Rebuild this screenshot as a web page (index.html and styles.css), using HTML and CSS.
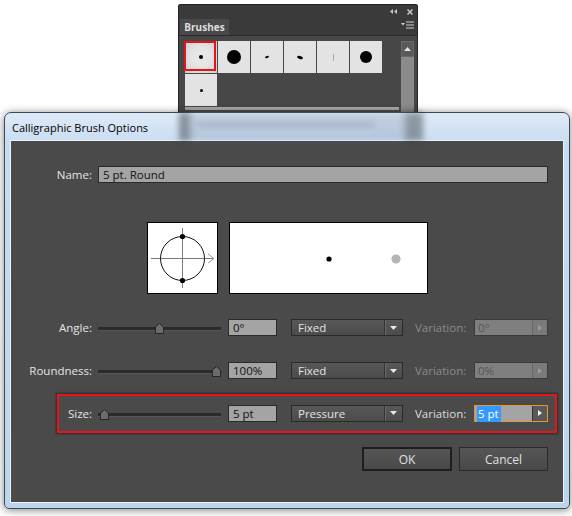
FILE: index.html
```html
<!DOCTYPE html>
<html lang="en">
<head>
    <meta charset="UTF-8">
    <title>Calligraphic Brush Options</title>
    <link rel="stylesheet" href="styles.css">
</head>
<body>
<div class="desk">

    <!-- Brushes panel behind the dialog -->
    <div class="panel">
        <div class="panel-top">
            <svg width="7" height="5" viewBox="0 0 7 5"><path d="M3 0 L0 2.5 L3 5 Z M7 0 L4 2.5 L7 5 Z" fill="#c8c8c8"/></svg>
            <svg width="6" height="6" viewBox="0 0 6 6"><path d="M0.5 0.5 L5.5 5.5 M5.5 0.5 L0.5 5.5" stroke="#c8c8c8" stroke-width="1.5"/></svg>
        </div>
        <div class="panel-tabs">
            <span class="tab">Brushes</span>
            <svg class="menu" width="13" height="8" viewBox="0 0 13 8"><path d="M0 2 H4 L2 4.5 Z" fill="#d0d0d0"/><path d="M5 1 H13 M5 4 H13 M5 7 H13" stroke="#d0d0d0" stroke-width="1.2"/></svg>
        </div>
        <div class="panel-body">
            <div class="brush-list">
                <div class="tiles">
                    <div class="tile selected"><span class="dot" style="width:4px;height:4px"></span><span class="pick"></span></div>
                    <div class="tile"><span class="dot" style="width:14px;height:14px"></span></div>
                    <div class="tile"><span class="dot dash"></span></div>
                    <div class="tile"><span class="dot blob"></span></div>
                    <div class="tile"><span class="hair"></span></div>
                    <div class="tile"><span class="dot" style="width:12px;height:12px"></span></div>
                    <div class="tile"><span class="dot" style="width:3px;height:3px"></span></div>
                </div>
                <div class="hscroll"></div>
            </div>
            <div class="vscroll">
                <div class="up"><svg width="7" height="4" viewBox="0 0 7 4"><path d="M0 4 L3.5 0 L7 4 Z" fill="#e6e6e6"/></svg></div>
            </div>
        </div>
    </div>

    <!-- dialog window -->
    <div class="dialog">
        <div class="titlebar">
            <div class="glass"></div>
            <span class="title">Calligraphic Brush Options</span>
        </div>
        <div class="content">
            <div class="row">
                <span class="label">Name:</span>
                <div class="field name-field">5 pt. Round</div>
            </div>

            <div class="preview">
                <div class="preview-box small">
                    <svg width="69" height="70" viewBox="0 0 69 70">
                        <path d="M3 35.5 H65 M34.5 5 V65" stroke="#7a7a7a" stroke-width="1"/>
                        <path d="M60 31 L66 35.5 L60 40" stroke="#9a9a9a" fill="none"/>
                        <circle cx="34.5" cy="35.5" r="22" stroke="#111" fill="none"/>
                        <circle cx="34.5" cy="13.5" r="2.6" fill="#000"/>
                        <circle cx="34.5" cy="57.5" r="2.6" fill="#000"/>
                    </svg>
                </div>
                <div class="preview-box big">
                    <svg width="197" height="70" viewBox="0 0 197 70">
                        <circle cx="99" cy="36" r="2.6" fill="#000"/>
                        <circle cx="166" cy="36" r="4.6" fill="#b5b5b5"/>
                    </svg>
                </div>
            </div>

            <div class="row angle-row">
                <span class="label">Angle:</span>
                <div class="slider"><div class="track"></div>
                    <svg class="thumb" style="left:57px" width="9" height="11" viewBox="0 0 9 11"><path d="M4.5 0.5 L8.5 4 V10.5 H0.5 V4 Z" fill="#6c6c6c" stroke="#252525"/></svg>
                </div>
                <div class="field num">0°</div>
                <div class="select"><span class="opt">Fixed</span><span class="arrow"><svg width="7" height="4" viewBox="0 0 7 4"><path d="M0 0 H7 L3.5 4 Z" fill="#e8e8e8"/></svg></span></div>
                <span class="var-label">Variation:</span>
                <div class="var"><span class="val">0°</span><span class="step"><svg width="4" height="6" viewBox="0 0 4 6"><path d="M0 0 L4 3 L0 6 Z" fill="#9c9c9c"/></svg></span></div>
            </div>

            <div class="row round-row">
                <span class="label">Roundness:</span>
                <div class="slider"><div class="track"></div>
                    <svg class="thumb" style="left:114px" width="9" height="11" viewBox="0 0 9 11"><path d="M4.5 0.5 L8.5 4 V10.5 H0.5 V4 Z" fill="#6c6c6c" stroke="#252525"/></svg>
                </div>
                <div class="field num">100%</div>
                <div class="select"><span class="opt">Fixed</span><span class="arrow"><svg width="7" height="4" viewBox="0 0 7 4"><path d="M0 0 H7 L3.5 4 Z" fill="#e8e8e8"/></svg></span></div>
                <span class="var-label">Variation:</span>
                <div class="var"><span class="val">0%</span><span class="step"><svg width="4" height="6" viewBox="0 0 4 6"><path d="M0 0 L4 3 L0 6 Z" fill="#9c9c9c"/></svg></span></div>
            </div>

            <div class="size-box">
                <div class="row">
                    <span class="label size-label">Size:</span>
                    <div class="slider"><div class="track"></div>
                        <svg class="thumb" style="left:2px" width="9" height="11" viewBox="0 0 9 11"><path d="M4.5 0.5 L8.5 4 V10.5 H0.5 V4 Z" fill="#6c6c6c" stroke="#252525"/></svg>
                    </div>
                    <div class="field num">5 pt</div>
                    <div class="select"><span class="opt">Pressure</span><span class="arrow"><svg width="7" height="4" viewBox="0 0 7 4"><path d="M0 0 H7 L3.5 4 Z" fill="#e8e8e8"/></svg></span></div>
                    <span class="var-label on">Variation:</span>
                    <div class="var active"><span class="val"><span class="sel">5 pt</span></span><span class="step"><svg width="4" height="6" viewBox="0 0 4 6"><path d="M0 0 L4 3 L0 6 Z" fill="#f2f2f2"/></svg></span></div>
                </div>
            </div>

            <div class="buttons">
                <div class="btn default">OK</div>
                <div class="btn">Cancel</div>
            </div>
        </div>
    </div>

</div>
</body>
</html>
```

FILE: styles.css
```css
body {
    margin: 0;
    background: #fff;
    font-family: "Open Sans", Arial, sans-serif;
}
.desk {
    position: relative;
    width: 572px;
    height: 516px;
    overflow: hidden;
}

/* brushes panel */
.panel {
    position: absolute;
    left: 178px;
    top: 4px;
    width: 240px;
    height: 130px;
    box-sizing: border-box;
    border: 1px solid #262626;
    border-radius: 2px 2px 0 0;
    background: #3a3a3a;
}
.panel-top {
    height: 13px;
    display: flex;
    justify-content: flex-end;
    align-items: center;
    gap: 10px;
    padding-right: 4px;
}
.panel-tabs {
    height: 17px;
    display: flex;
    align-items: flex-end;
    justify-content: space-between;
    border-bottom: 1px solid #2a2a2a;
}
.tab {
    margin-left: 1px;
    width: 49px;
    height: 16px;
    background: #4a4a4a;
    color: #dedede;
    font-weight: bold;
    font-size: 10px;
    line-height: 16px;
    text-align: center;
}
.menu {
    margin: 0 3px 6px 0;
}
.panel-body {
    display: flex;
    background: #474747;
    padding: 5px 3px 0 6px;
    height: 80px;
}
.brush-list {
    width: 214px;
}
.tiles {
    display: grid;
    grid-template-columns: repeat(6, 32px);
    grid-auto-rows: 32px;
    gap: 1px;
}
.tile {
    position: relative;
    background: #e3e3e3;
    display: flex;
    align-items: center;
    justify-content: center;
}
.tile.selected {
    background: radial-gradient(#e6e6e6 40%, #cfcfcf);
}
.pick {
    position: absolute;
    left: -1px;
    top: 0;
    width: 32px;
    height: 30px;
    box-sizing: border-box;
    border: 2px solid #e3141b;
}
.dot {
    display: block;
    background: #000;
    border-radius: 50%;
}
.dash {
    width: 4px;
    height: 2px;
    transform: rotate(-20deg);
}
.blob {
    width: 6px;
    height: 3px;
    transform: rotate(15deg);
}
.hair {
    display: block;
    width: 1px;
    height: 7px;
    background: #a8a8a8;
}
.hscroll {
    margin-top: 1px;
    height: 3px;
    background: #a9a9a9;
}
.vscroll {
    margin-left: auto;
    width: 13px;
    background: #8b8b8b;
}
.up {
    height: 16px;
    box-sizing: border-box;
    border: 1px solid #6a6a6a;
    background: #5a5a5a;
    display: flex;
    align-items: center;
    justify-content: center;
}

/* dialog */
.dialog {
    position: absolute;
    left: 4px;
    top: 112px;
    width: 566px;
    height: 397px;
    box-sizing: border-box;
    border: 1px solid #3d4957;
    border-radius: 7px 7px 5px 5px;
    background: linear-gradient(#dfeaf7, #c8dcf1 30px, #bcd4ec);
    box-shadow: 0 1px 8px rgba(0, 0, 0, 0.5);
    padding: 0 6px 6px;
    display: flex;
    flex-direction: column;
}
.titlebar {
    position: relative;
    height: 28px;
    display: flex;
    align-items: center;
    padding-left: 1px;
}
.glass {
    position: absolute;
    left: 168px;
    top: -1px;
    width: 244px;
    height: 29px;
    background: linear-gradient(to right, rgba(50, 56, 64, 0.5) 0, rgba(50, 56, 64, 0.5) 3%, rgba(100, 120, 145, 0.22) 6%, rgba(100, 120, 145, 0.22) 91%, rgba(50, 56, 64, 0.45) 94%, rgba(50, 56, 64, 0.45) 100%);
    filter: blur(3px);
}
.glass::after {
    content: "";
    position: absolute;
    left: 18px;
    top: 11px;
    width: 178px;
    height: 3px;
    background: rgba(70, 82, 100, 0.35);
}
.title {
    position: relative;
    font-size: 11px;
    color: #000;
}
.content {
    flex: 1;
    background: #4a4a4a;
    box-shadow: 0 0 0 1px #eef4fb;
    padding-top: 25px;
}

.row {
    display: flex;
    align-items: center;
    height: 17px;
}
.label {
    width: 87px;
    box-sizing: border-box;
    padding-right: 6px;
    text-align: right;
    color: #e4e4e4;
    font-size: 11.5px;
}
.size-label {
    width: 39px;
}
.field {
    height: 17px;
    box-sizing: border-box;
    border: 1px solid #2a2a2a;
    background: #a4a4a4;
    color: #111;
    font-size: 11.5px;
    line-height: 15px;
    padding-left: 4px;
}
.name-field {
    width: 450px;
}

.preview {
    display: flex;
    gap: 11px;
    margin-top: 39px;
    padding-left: 136px;
}
.preview-box {
    height: 72px;
    box-sizing: border-box;
    border: 1px solid #000;
    background: #fff;
}
.preview-box svg {
    display: block;
}
.small {
    width: 71px;
}
.big {
    width: 199px;
}

.angle-row {
    margin-top: 25px;
}
.round-row {
    margin-top: 26px;
}
.slider {
    position: relative;
    width: 123px;
    height: 17px;
    display: flex;
    align-items: center;
}
.track {
    width: 100%;
    height: 3px;
    margin-top: 3px;
    background: #2b2b2b;
    border-bottom: 1px solid #565656;
}
.thumb {
    position: absolute;
    top: 4px;
}
.num {
    width: 49px;
    margin-left: 7px;
}
.select {
    width: 112px;
    height: 17px;
    margin-left: 14px;
    box-sizing: border-box;
    display: flex;
    border: 1px solid #2a2a2a;
    background: linear-gradient(#585858, #4b4b4b);
    color: #e2e2e2;
    font-size: 11.5px;
}
.opt {
    flex: 1;
    padding-left: 6px;
    line-height: 15px;
}
.arrow {
    width: 17px;
    border-left: 1px solid #333;
    box-shadow: inset 1px 0 #6a6a6a;
    display: flex;
    align-items: center;
    justify-content: center;
}
.var-label {
    width: 48px;
    margin-left: 12px;
    text-align: right;
    color: #8b8b8b;
    font-size: 11.5px;
}
.var-label.on {
    color: #dedede;
}
.var {
    width: 74px;
    height: 17px;
    margin-left: 11px;
    box-sizing: border-box;
    display: flex;
    border: 1px solid #3a3a3a;
    background: #7f7f7f;
    font-size: 11.5px;
}
.val {
    flex: 1;
    padding-left: 3px;
    line-height: 15px;
    color: #575757;
}
.step {
    width: 14px;
    border-left: 1px solid #666;
    background: #7a7a7a;
    display: flex;
    align-items: center;
    justify-content: center;
}
.var.active {
    border-color: #e8952e;
    background: #a4a4a4;
}
.var.active .val {
    color: #111;
    padding-left: 2px;
}
.sel {
    background: #3399ff;
    color: #fff;
    padding: 0 2px 1px 1px;
}
.var.active .step {
    background: #595959;
    border-left-color: #333;
}

.size-box {
    margin: 15px 0 0 46px;
    width: 500px;
    box-sizing: border-box;
    border: 2px solid #e8141c;
    padding: 8px 0 9px;
    box-shadow: 0 0 2px 1px rgba(0, 0, 0, 0.45);
}
.size-box .row {
    height: 18px;
}

.buttons {
    display: flex;
    justify-content: flex-end;
    gap: 7px;
    margin-top: 14px;
    padding-right: 15px;
}
.btn {
    width: 89px;
    height: 24px;
    box-sizing: border-box;
    border: 1px solid #2a2a2a;
    background: linear-gradient(#565656, #484848);
    color: #e0e0e0;
    font-size: 12px;
    display: flex;
    align-items: center;
    justify-content: center;
}
.btn.default {
    width: 90px;
    border: 2px solid #1e1e1e;
}
```
